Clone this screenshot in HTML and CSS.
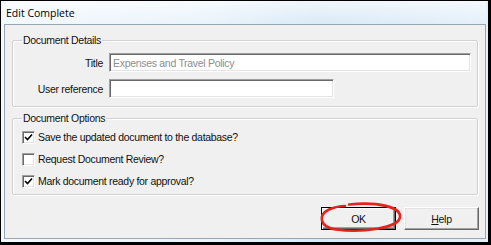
FILE: index.html
```html
<!DOCTYPE html>
<html>
<head>
<meta charset="utf-8">
<link rel="stylesheet" href="styles.css">
</head>
<body>
<div class="screen">
  <div class="window">
    <div class="titlebar">Edit Complete</div>
    <div class="dialog">
      <fieldset class="group">
        <legend>Document Details</legend>
        <div class="form">
          <label class="lbl">Title</label>
          <div class="field wide"><span class="val">Expenses and Travel Policy</span></div>
          <label class="lbl">User reference</label>
          <div class="field narrow"></div>
        </div>
      </fieldset>
      <fieldset class="group options">
        <legend>Document Options</legend>
        <div class="opt"><span class="cb"><svg viewBox="0 0 9 9" width="9" height="9"><path d="M1 4 L3.5 6.5 L8 1.5" fill="none" stroke="#000" stroke-width="1.6"/></svg></span><span>Save the updated document to the database?</span></div>
        <div class="opt"><span class="cb"></span><span>Request Document Review?</span></div>
        <div class="opt"><span class="cb"><svg viewBox="0 0 9 9" width="9" height="9"><path d="M1 4 L3.5 6.5 L8 1.5" fill="none" stroke="#000" stroke-width="1.6"/></svg></span><span>Mark document ready for approval?</span></div>
      </fieldset>
      <div class="buttons">
        <button class="btn default">OK</button>
        <button class="btn"><u>H</u>elp</button>
      </div>
    </div>
  </div>
  <svg class="circle" width="491" height="245" viewBox="0 0 491 245">
    <path d="M349 204.5 C378 201.5 401 207 400 217 C399 228 362 233 336 229.5 C319 227 318 215 329 209.5 C335 207 340 206 345 206" fill="none" stroke="#e3231e" stroke-width="2.6" stroke-linecap="round"/>
  </svg>
</div>
</body>
</html>
```

FILE: styles.css
```css
html, body {
  margin: 0;
  padding: 0;
  background: #fff;
}

.screen {
  position: relative;
  width: 491px;
  height: 245px;
  box-sizing: border-box;
  background: #000;
  padding: 1px 3px 3px 1px;
  font-family: "Liberation Sans", Arial, sans-serif;
  font-size: 10.5px;
  letter-spacing: -0.3px;
  color: #111;
}

.window {
  width: 487px;
  height: 241px;
  box-sizing: border-box;
  padding: 0 2px 3px 3px;
  background: linear-gradient(to right, #f2f8fc 0%, #eaf4fb 40%, #d9eaf7 65%, #e4f0fa 100%);
  display: flex;
  flex-direction: column;
}

.titlebar {
  height: 23px;
  flex: none;
  display: flex;
  align-items: center;
  padding-left: 2px;
  font-family: "Open Sans", "Noto Sans", sans-serif;
  font-size: 10.5px;
  letter-spacing: 0;
  color: #000;
  background: linear-gradient(to bottom, rgba(255,255,255,0.6), rgba(255,255,255,0));
}

.dialog {
  flex: 1;
  border: 1px solid #9aa7b3;
  background: #f0f0f0;
  display: flex;
  flex-direction: column;
}

.group {
  margin: 9px 7px 0 7px;
  padding: 6px 9px 8px 9px;
  border: 1px solid #d0d0d0;
  border-radius: 2px;
  box-shadow: inset 1px 1px 0 #fff, 1px 1px 0 #fff;
  min-width: 0;
}

.group legend {
  padding: 0 1px;
  margin-left: 0;
  line-height: 13px;
  color: #111;
}

.form {
  display: grid;
  grid-template-columns: 81px auto;
  column-gap: 6px;
  row-gap: 7px;
  align-items: center;
}

.lbl {
  text-align: right;
}

.field {
  height: 19px;
  box-sizing: border-box;
  background: #fff;
  border-style: solid;
  border-width: 1px;
  border-color: #a0a0a0 #fff #fff #a0a0a0;
  box-shadow: inset 1px 1px 0 #696969, inset -1px -1px 0 #e3e3e3;
  display: flex;
  align-items: center;
  padding-left: 3px;
}

.field.wide { width: 362px; }
.field.narrow { width: 225px; }

.val {
  color: #8d8d8d;
}

.options {
  margin-top: 5px;
  padding: 2px 9px 3px 9px;
  display: flex;
  flex-direction: column;
  gap: 2px;
}

.opt {
  height: 20px;
  display: flex;
  align-items: center;
  gap: 3px;
}

.cb {
  width: 13px;
  height: 13px;
  box-sizing: border-box;
  background: #fff;
  border-style: solid;
  border-width: 1px;
  border-color: #a0a0a0 #fff #fff #a0a0a0;
  box-shadow: inset 1px 1px 0 #696969, inset -1px -1px 0 #e3e3e3;
  display: flex;
  align-items: center;
  justify-content: center;
  flex: none;
}

.cb svg { display: block; }

.buttons {
  margin: 12px 6px 0 0;
  display: flex;
  justify-content: flex-end;
  gap: 8px;
}

.btn {
  width: 75px;
  height: 23px;
  box-sizing: border-box;
  font-family: "Liberation Sans", Arial, sans-serif;
  font-size: 10.5px;
  letter-spacing: -0.3px;
  color: #111;
  background: #f0f0f0;
  border: 1px solid;
  border-color: #fff #696969 #696969 #fff;
  box-shadow: inset -1px -1px 0 #a0a0a0, inset 1px 1px 0 #e3e3e3;
  padding: 0;
}

.btn.default {
  border: 1px solid #000;
  box-shadow: inset 1px 1px 0 #fff, inset -1px -1px 0 #696969, inset -2px -2px 0 #a0a0a0;
}

.circle {
  position: absolute;
  left: 0;
  top: 0;
  pointer-events: none;
}
```
